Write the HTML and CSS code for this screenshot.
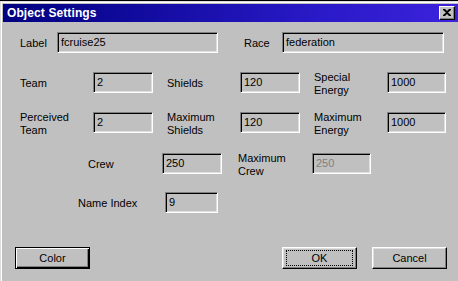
FILE: index.html
```html
<!DOCTYPE html>
<html>
<head>
<meta charset="utf-8">
<link rel="stylesheet" href="styles.css">
</head>
<body>
<div class="window">
  <div class="titlebar">
    <span class="title">Object Settings</span>
    <div class="close"><svg width="8" height="7" viewBox="0 0 8 7"><path d="M0 0h2l2 2 2-2h2v1L5 3.5 8 6v1H6L4 5 2 7H0V6l3-2.5L0 1z" fill="#000"/></svg></div>
  </div>
  <div class="content">
    <div class="row r1">
      <div class="lbl w37">Label</div>
      <div class="field w161">fcruise25</div>
      <div class="lbl w38 ml26">Race</div>
      <div class="field w162">federation</div>
    </div>
    <div class="row r2">
      <div class="lbl w73">Team</div>
      <div class="field w60">2</div>
      <div class="lbl w73 ml14">Shields</div>
      <div class="field w60">120</div>
      <div class="lbl w73 ml14">Special<br>Energy</div>
      <div class="field w59">1000</div>
    </div>
    <div class="row r3">
      <div class="lbl w73">Perceived<br>Team</div>
      <div class="field w60">2</div>
      <div class="lbl w73 ml14">Maximum<br>Shields</div>
      <div class="field w60">120</div>
      <div class="lbl w73 ml14">Maximum<br>Energy</div>
      <div class="field w59">1000</div>
    </div>
    <div class="row r4">
      <div class="lbl w74">Crew</div>
      <div class="field w60">250</div>
      <div class="lbl w74 ml16">Maximum<br>Crew</div>
      <div class="field w59 disabled">250</div>
    </div>
    <div class="row r5">
      <div class="lbl w87">Name Index</div>
      <div class="field w53">9</div>
    </div>
    <div class="buttons">
      <div class="btn default">Color</div>
      <div class="btn focus ok"><span>OK</span></div>
      <div class="btn cancel">Cancel</div>
    </div>
  </div>
</div>
</body>
</html>
```
FILE: styles.css
```css
html, body {
  margin: 0;
  padding: 0;
  background: #000;
  width: 458px;
  height: 281px;
  overflow: hidden;
}
.window {
  margin-top: 1px;
  height: 280px;
  box-sizing: border-box;
  background: #c0c0c0;
  border-top: 1px solid #dfdfdf;
  border-left: 1px solid #dfdfdf;
  padding: 2px 0 0 2px;
  box-shadow: inset 1px 1px #fff;
  font-family: "Liberation Sans", Arial, sans-serif;
  font-size: 11px;
  color: #000;
}
.titlebar {
  height: 18px;
  background: linear-gradient(to right, #000080, #2a1ac8 70%, #3c22dc);
  display: flex;
  align-items: center;
  justify-content: space-between;
  padding-left: 4px;
  padding-right: 3px;
}
.title {
  color: #fff;
  font-weight: bold;
  font-size: 12px;
  letter-spacing: 0.1px;
}
.close {
  width: 16px;
  height: 14px;
  box-sizing: border-box;
  background: #c0c0c0;
  border-top: 1px solid #fff;
  border-left: 1px solid #fff;
  border-right: 1px solid #000;
  border-bottom: 1px solid #000;
  box-shadow: inset -1px -1px #808080;
  display: flex;
  align-items: center;
  justify-content: center;
  padding-bottom: 1px;
}
.content {
  padding: 10px 0 0 17px;
}
.row {
  display: flex;
  align-items: center;
  height: 21px;
}
.r2 { margin-top: 19px; }
.r3 { margin-top: 19px; }
.r4 { margin-top: 20px; padding-left: 68px; }
.r5 { margin-top: 18px; padding-left: 58px; }
.lbl {
  line-height: 13px;
  padding-top: 2px;
  flex: none;
}
.field {
  flex: none;
  height: 21px;
  box-sizing: border-box;
  border: 1px solid;
  border-color: #808080 #fff #fff #808080;
  box-shadow: inset 1px 1px #000, inset -1px -1px #dfdfdf;
  padding: 3px 0 0 3px;
  line-height: 13px;
  white-space: nowrap;
  overflow: hidden;
}
.disabled { color: #808080; }
.w37 { width: 37px; }
.w38 { width: 38px; }
.w73 { width: 73px; }
.w74 { width: 74px; }
.w87 { width: 87px; }
.w161 { width: 161px; }
.w162 { width: 162px; }
.w60 { width: 60px; }
.w59 { width: 59px; }
.w53 { width: 53px; }
.ml26 { margin-left: 26px; }
.ml14 { margin-left: 14px; }
.ml16 { margin-left: 16px; }
.buttons {
  display: flex;
  margin-top: 34px;
  margin-left: -5px;
  height: 22px;
}
.btn {
  flex: none;
  width: 75px;
  height: 22px;
  box-sizing: border-box;
  background: #c0c0c0;
  border-top: 1px solid #fff;
  border-left: 1px solid #fff;
  border-right: 1px solid #000;
  border-bottom: 1px solid #000;
  box-shadow: inset -1px -1px #808080, inset 1px 1px #dfdfdf;
  display: flex;
  align-items: center;
  justify-content: center;
  font-size: 11px;
}
.btn.ok { margin-left: 192px; }
.btn.cancel { margin-left: 15px; }
.btn.default {
  border: 1px solid #000;
  box-shadow: inset 1px 1px #fff, inset -1px -1px #000, inset -2px -2px #808080;
}
.btn.focus span {
  display: flex;
  align-items: center;
  justify-content: center;
  width: 65px;
  height: 14px;
  outline: 1px dotted #000;
}
```
